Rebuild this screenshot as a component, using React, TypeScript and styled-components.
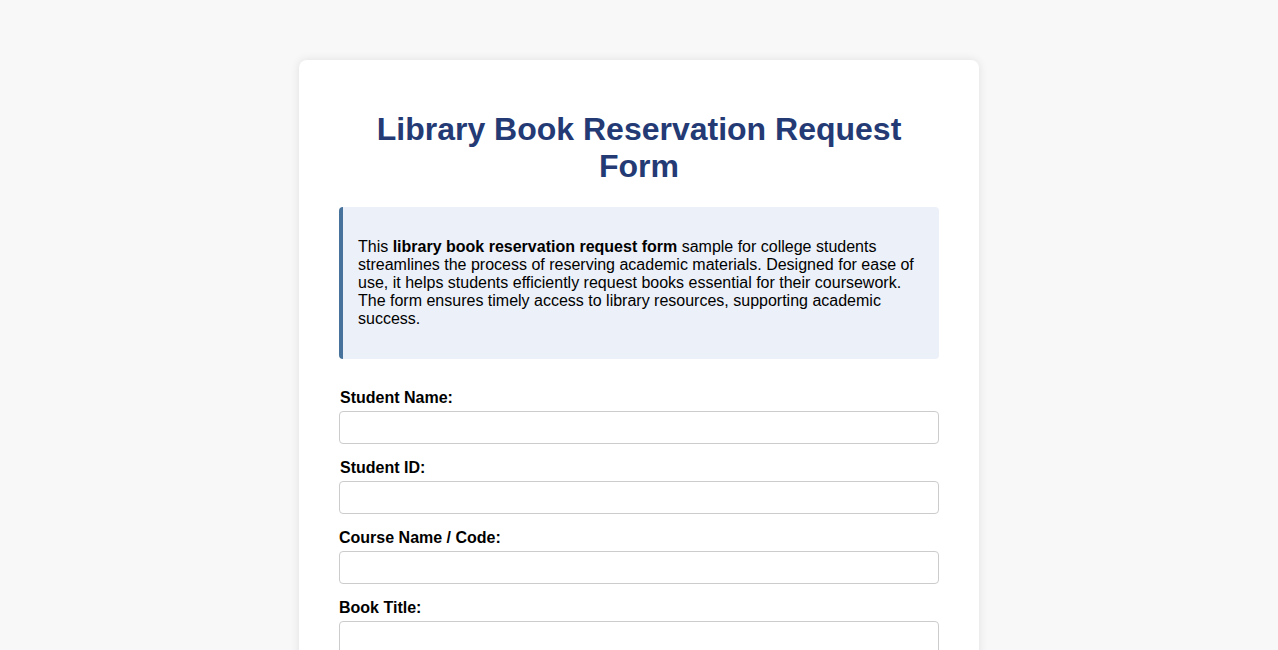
import React from "react";
import styled, { createGlobalStyle } from "styled-components";

const GlobalStyle = createGlobalStyle`
  html, body {
    margin: 0;
    padding: 0;
    background: #f8f8f8;
    font-family: "Liberation Sans", Arial, sans-serif;
    color: #000;
  }
`;

const Page = styled.div`
  padding: 60px 0 40px;
  display: flex;
  justify-content: center;
`;

const Card = styled.div`
  width: 680px;
  box-sizing: border-box;
  background: #fff;
  border-radius: 8px;
  box-shadow: 0 0 10px rgba(0, 0, 0, 0.1);
  padding: 30px 40px 40px;
`;

const Title = styled.h1`
  margin: 21px 0 22px;
  text-align: center;
  color: #233a75;
  font-size: 32px;
  line-height: 37px;
  font-weight: bold;
`;

const Info = styled.div`
  background: #ecf0f8;
  border-left: 4px solid #47729b;
  border-radius: 4px;
  padding: 15px;
  margin-bottom: 30px;

  p {
    margin: 16px 0;
    font-size: 16px;
    line-height: 18px;
  }
`;

const Field = styled.div`
  display: flex;
  flex-direction: column;
  margin-bottom: 15px;
`;

const Label = styled.label<{ $indent?: boolean }>`
  font-weight: bold;
  font-size: 16px;
  line-height: 18px;
  margin-bottom: 4px;
  padding-left: ${(p) => (p.$indent ? "1px" : "0")};
`;

const Input = styled.input`
  width: 600px;
  height: 33px;
  box-sizing: border-box;
  border: 1px solid #ccc;
  border-radius: 4px;
  padding: 8px;
  font-size: 14px;
  font-family: inherit;
`;

const fields = [
  { label: "Student Name:", indent: true },
  { label: "Student ID:", indent: true },
  { label: "Course Name / Code:" },
  { label: "Book Title:" },
  { label: "Author:" },
];

export default function App() {
  return (
    <>
      <GlobalStyle />
      <Page>
        <Card>
          <Title>Library Book Reservation Request Form</Title>
          <Info>
            <p>
              This <strong>library book reservation request form</strong> sample for college
              students streamlines the process of reserving academic materials. Designed for
              ease of use, it helps students efficiently request books essential for their
              coursework. The form ensures timely access to library resources, supporting
              academic success.
            </p>
          </Info>
          {fields.map((f) => (
            <Field key={f.label}>
              <Label $indent={f.indent}>{f.label}</Label>
              <Input type="text" />
            </Field>
          ))}
        </Card>
      </Page>
    </>
  );
}
